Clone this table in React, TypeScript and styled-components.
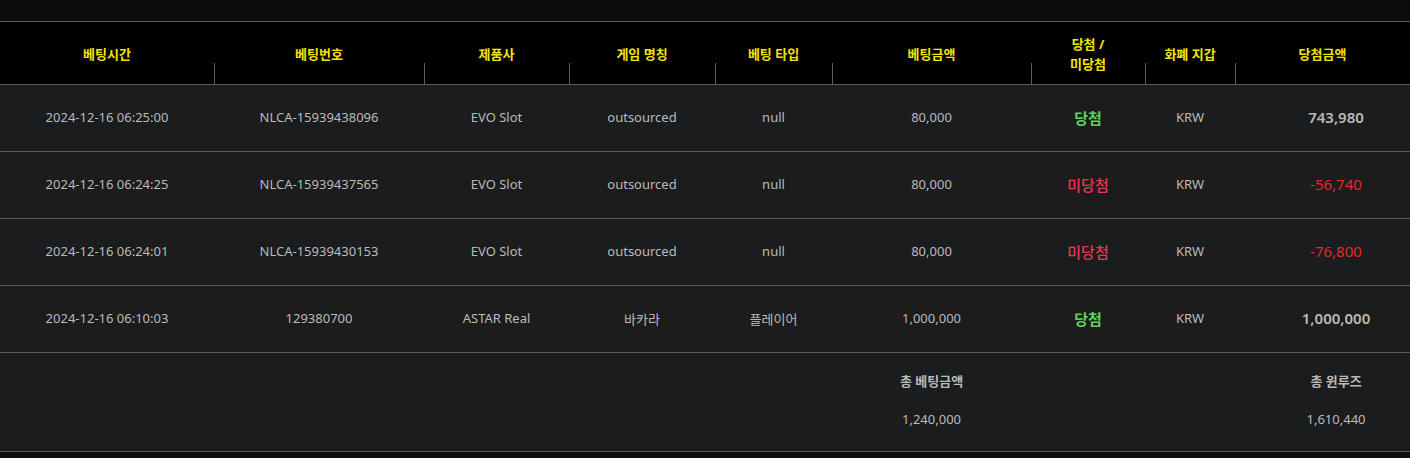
import React from 'react';
import styled, { createGlobalStyle } from 'styled-components';

const GlobalStyle = createGlobalStyle`
  html, body {
    margin: 0;
    padding: 0;
    background: #0e0e0e;
    font-family: "Noto Sans", "Noto Sans CJK KR", sans-serif;
  }
`;

const COLS = '214px 210px 145px 146px 117px 199px 114px 90px 1fr';

const Page = styled.div`
  width: 1410px;
  background: #0e0e0e;
`;

const TopBand = styled.div`
  height: 21px;
  background: #0b0b0b;
  border-bottom: 1px solid #585858;
`;

const Row = styled.div<{ $bg: string; $height: number }>`
  display: grid;
  grid-template-columns: ${COLS};
  height: ${p => p.$height}px;
  background: ${p => p.$bg};
  border-bottom: 1px solid #5a5a5a;
`;

const HeadCell = styled.div<{ $divider?: boolean }>`
  position: relative;
  display: flex;
  align-items: center;
  justify-content: center;
  text-align: center;
  color: #f5e400;
  font-size: 13px;
  font-weight: 700;
  line-height: 20px;
  padding-top: 1px;

  &::before {
    content: '';
    display: ${p => (p.$divider ? 'block' : 'none')};
    position: absolute;
    left: 0;
    bottom: 0;
    width: 1px;
    height: 21px;
    background: #5a5a5a;
  }
`;

const Cell = styled.div<{ $tone?: 'win' | 'lose' | 'neg'; $big?: boolean; $last?: boolean }>`
  display: flex;
  align-items: center;
  justify-content: center;
  padding: 0 0 2px ${p => (p.$last ? '27px' : '0')};
  color: ${p =>
    p.$tone === 'win' ? '#5fd35b' : p.$tone === 'lose' ? '#e8384f' : p.$tone === 'neg' ? '#e2282d' : '#bababa'};
  font-size: ${p => (p.$big || p.$tone ? '15px' : '13px')};
  font-weight: ${p => (p.$tone === 'win' ? 700 : p.$big ? 600 : p.$tone === 'lose' ? 500 : 400)};
  white-space: nowrap;
`;

const SumCell = styled.div<{ $last?: boolean }>`
  display: flex;
  flex-direction: column;
  align-items: center;
  padding: 18px 0 0 ${p => (p.$last ? '27px' : '0')};
  gap: 18px;
  color: #bababa;
  font-size: 13px;
  line-height: 20px;
`;

const SumLabel = styled.div`
  font-weight: 700;
`;

const BottomBand = styled.div`
  height: 6px;
  background: #0e0e0e;
`;

type Bet = {
  time: string;
  id: string;
  vendor: string;
  game: string;
  type: string;
  amount: string;
  win: boolean;
  currency: string;
  payout: string;
};

const bets: Bet[] = [
  { time: '2024-12-16 06:25:00', id: 'NLCA-15939438096', vendor: 'EVO Slot', game: 'outsourced', type: 'null', amount: '80,000', win: true, currency: 'KRW', payout: '743,980' },
  { time: '2024-12-16 06:24:25', id: 'NLCA-15939437565', vendor: 'EVO Slot', game: 'outsourced', type: 'null', amount: '80,000', win: false, currency: 'KRW', payout: '-56,740' },
  { time: '2024-12-16 06:24:01', id: 'NLCA-15939430153', vendor: 'EVO Slot', game: 'outsourced', type: 'null', amount: '80,000', win: false, currency: 'KRW', payout: '-76,800' },
  { time: '2024-12-16 06:10:03', id: '129380700', vendor: 'ASTAR Real', game: '바카라', type: '플레이어', amount: '1,000,000', win: true, currency: 'KRW', payout: '1,000,000' },
];

const headers = ['베팅시간', '베팅번호', '제품사', '게임 명칭', '베팅 타입', '베팅금액', '당첨 /\n미당첨', '화폐 지갑', '당첨금액'];

export default function App() {
  return (
    <Page>
      <GlobalStyle />
      <TopBand />

      {/* 헤더 */}
      <Row $bg="#000" $height={62}>
        {headers.map((h, i) => (
          <HeadCell key={h} $divider={i > 0}>
            {h.includes('\n') ? (
              <span>
                당첨 /<br />미당첨
              </span>
            ) : (
              h
            )}
          </HeadCell>
        ))}
      </Row>

      {/* 베팅 목록 */}
      {bets.map((b, i) => (
        <Row key={b.time} $bg={i % 2 === 0 ? '#1a1c1d' : '#1c1c1c'} $height={66}>
          <Cell>{b.time}</Cell>
          <Cell>{b.id}</Cell>
          <Cell>{b.vendor}</Cell>
          <Cell>{b.game}</Cell>
          <Cell>{b.type}</Cell>
          <Cell>{b.amount}</Cell>
          <Cell $tone={b.win ? 'win' : 'lose'}>{b.win ? '당첨' : '미당첨'}</Cell>
          <Cell>{b.currency}</Cell>
          {b.win ? (
            <Cell $big $last>{b.payout}</Cell>
          ) : (
            <Cell $tone="neg" $last>{b.payout}</Cell>
          )}
        </Row>
      ))}

      {/* 합계 */}
      <Row $bg="#1a1c1d" $height={98}>
        <div />
        <div />
        <div />
        <div />
        <div />
        <SumCell>
          <SumLabel>총 베팅금액</SumLabel>
          <div>1,240,000</div>
        </SumCell>
        <div />
        <div />
        <SumCell $last>
          <SumLabel>총 윈루즈</SumLabel>
          <div>1,610,440</div>
        </SumCell>
      </Row>
      <BottomBand />
    </Page>
  );
}
